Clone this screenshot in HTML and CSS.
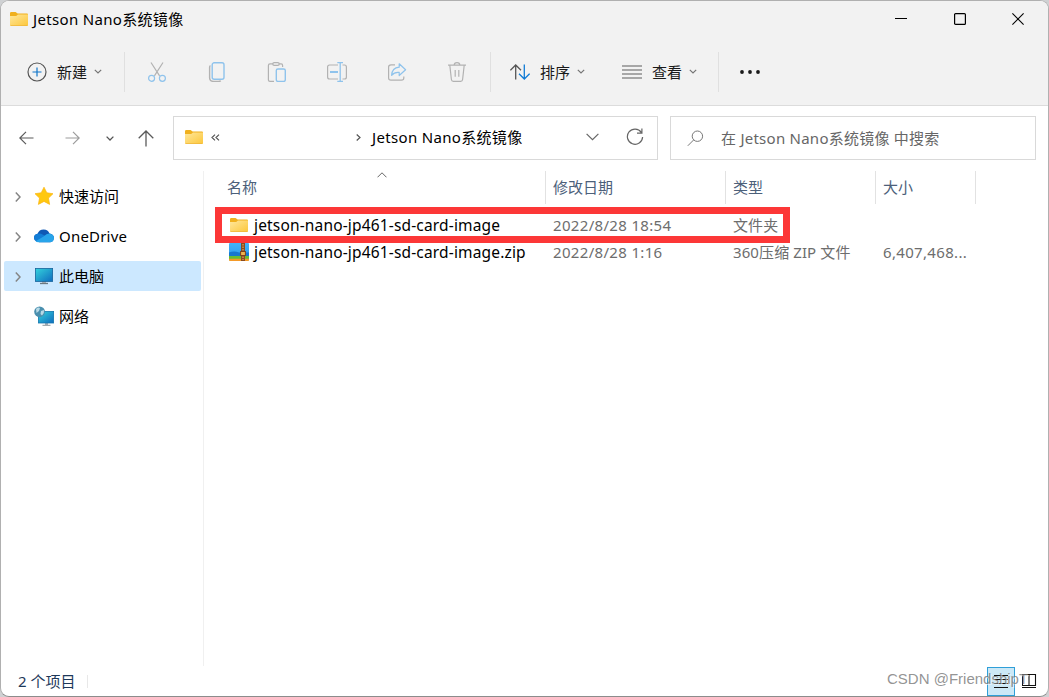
FILE: index.html
```html
<!DOCTYPE html>
<html lang="zh-CN">
<head>
    <meta charset="UTF-8">
    <meta name="viewport" content="width=device-width, initial-scale=1.0">
    <title>Jetson Nano系统镜像</title>
    <link rel="stylesheet" href="styles.css">
</head>
<body>
    <!-- 公用图标 -->
    <svg class="defs" width="0" height="0">
        <defs>
            <linearGradient id="g-folder" x1="0" y1="0" x2="1" y2="1">
                <stop offset="0" stop-color="#ffe79c"/>
                <stop offset="1" stop-color="#fcc73b"/>
            </linearGradient>
            <linearGradient id="g-screen" x1="0" y1="0" x2="1" y2="1">
                <stop offset="0" stop-color="#34d3dc"/>
                <stop offset="1" stop-color="#0f6cbf"/>
            </linearGradient>
            <linearGradient id="g-zip" x1="0" y1="0" x2="0" y2="1">
                <stop offset="0" stop-color="#42b4f8"/>
                <stop offset="1" stop-color="#2a96ee"/>
            </linearGradient>
            <symbol id="folder" viewBox="0 0 18 14">
                <path d="M0 1.2Q0 0 1.2 0H5.6L7.6 1.6H17Q18 1.6 18 2.6V8H0z" fill="#f0b01e"/>
                <path d="M0 3.9H6.2L8 2.5H18V13Q18 14 17 14H1Q0 14 0 13z" fill="url(#g-folder)"/>
                <path d="M.5 13.6H17.5" stroke="#edb53a" stroke-width=".8"/>
            </symbol>
            <symbol id="down" viewBox="0 0 8 5">
                <path d="M.8 .8L4 4L7.2 .8" fill="none" stroke="currentColor" stroke-width="1.2"/>
            </symbol>
            <symbol id="right" viewBox="0 0 6 10">
                <path d="M.8 .6L5 5L.8 9.4" fill="none" stroke="currentColor" stroke-width="1.5"/>
            </symbol>
        </defs>
    </svg>

    <div class="window">
        <div class="titlebar">
            <svg class="folder" width="18" height="14"><use href="#folder"/></svg>
            <span class="title">Jetson Nano系统镜像</span>
            <div class="controls">
                <svg width="12" height="12"><path d="M0 5.5H12" stroke="#000"/></svg>
                <svg width="12" height="12"><rect x=".6" y=".6" width="10.8" height="10.8" rx="1" fill="none" stroke="#000" stroke-width="1.2"/></svg>
                <svg width="12" height="12"><path d="M.4 .4L11.6 11.6M11.6 .4L.4 11.6" stroke="#000" stroke-width="1.1"/></svg>
            </div>
        </div>

        <div class="toolbar">
            <div class="tool new">
                <svg width="20" height="20" fill="none">
                    <circle cx="10" cy="10" r="9" stroke="#555" stroke-width="1.2"/>
                    <path d="M5.5 10H14.5M10 5.5V14.5" stroke="#0f75c9" stroke-width="1.2"/>
                </svg>
                <span>新建</span>
                <svg class="arrow" width="8" height="5"><use href="#down"/></svg>
            </div>
            <i class="line"></i>
            <div class="icons">
                <svg width="20" height="20" fill="none" stroke-width="1.2">
                    <path d="M4 .5L12.6 13.8M16 .5L7.4 13.8" stroke="#b2b2b2"/>
                    <circle cx="4.6" cy="16.3" r="3" stroke="#8fc3ec"/>
                    <circle cx="15.4" cy="16.3" r="3" stroke="#8fc3ec"/>
                </svg>
                <svg width="20" height="20" fill="none" stroke-width="1.2">
                    <path d="M3.4 3.5Q2.6 4 2.6 5.5V15.5Q2.6 19.4 6.5 19.4H11.5Q13.2 19.4 13.7 18.6" stroke="#b2b2b2" stroke-width="1.4"/>
                    <rect x="5.2" y=".8" width="11.8" height="16.4" rx="2" stroke="#8fc3ec" stroke-width="1.4"/>
                </svg>
                <svg width="20" height="20" fill="none" stroke-width="1.2">
                    <path d="M6 1.8H3Q1.4 1.8 1.4 3.4V18Q1.4 19.4 3 19.4H7M12 1.8H14.2Q15.6 1.8 15.6 3.4V5" stroke="#b2b2b2"/>
                    <rect x="5.8" y=".7" width="6.4" height="2.6" rx="1.3" stroke="#b2b2b2"/>
                    <rect x="9.3" y="7" width="9" height="12.4" rx="1.6" stroke="#8fc3ec" stroke-width="1.4"/>
                </svg>
                <svg width="20" height="20" fill="none" stroke-width="1.2">
                    <path d="M11 3H2.5Q.6 3 .6 5V15Q.6 17 2.5 17H11M15.5 3H17.5Q19.4 3 19.4 5V15Q19.4 17 17.5 17H15.5" stroke="#b2b2b2"/>
                    <path d="M3 10H11" stroke="#8fc3ec" stroke-width="2"/>
                    <path d="M10.3 .7H16M10.3 19.3H16M13.2 .7V19.3" stroke="#8fc3ec" stroke-width="1.3"/>
                </svg>
                <svg width="20" height="20" fill="none" stroke-width="1.2">
                    <path d="M8 2.8H4Q1.6 2.8 1.6 5V16Q1.6 18.2 4 18.2H14.5Q16.8 18.2 16.8 16V14.5" stroke="#b2b2b2"/>
                    <path d="M12.2 1.8L18.6 7.8L12.2 13.5V10.4Q7.5 9.8 4.6 13.4Q5 5.8 12.2 5.2z" stroke="#8fc3ec" stroke-linejoin="round"/>
                </svg>
                <svg width="20" height="20" fill="none" stroke-width="1.2" stroke="#b2b2b2">
                    <path d="M1 3.2H19M2.8 3.2L4.4 17.5Q4.6 19.4 6.3 19.4H13.7Q15.4 19.4 15.6 17.5L17.2 3.2M7.2 3Q7.2 .6 10 .6Q12.8 .6 12.8 3M8.2 8V14.8M11.8 8V14.8"/>
                </svg>
            </div>
            <i class="line"></i>
            <div class="tool sort">
                <svg width="20" height="16" fill="none" stroke-width="1.3">
                    <path d="M5.7 15.5V1M.4 6.3L5.7 1L11 6.3" stroke="#555"/>
                    <path d="M14.3 .5V15M9 9.7L14.3 15L19.6 9.7" stroke="#0f7bd5"/>
                </svg>
                <span>排序</span>
                <svg class="arrow" width="8" height="5"><use href="#down"/></svg>
            </div>
            <div class="tool view">
                <svg width="20" height="14"><path d="M0 1H20M0 5H20M0 9H20M0 13H20" stroke="#5c5c5c" stroke-width="1.2"/></svg>
                <span>查看</span>
                <svg class="arrow" width="8" height="5"><use href="#down"/></svg>
            </div>
            <i class="line"></i>
            <svg class="more" width="20" height="4" fill="#1a1a1a"><circle cx="2" cy="2" r="1.9"/><circle cx="10" cy="2" r="1.9"/><circle cx="18" cy="2" r="1.9"/></svg>
        </div>

        <div class="navbar">
            <div class="history">
                <svg width="15" height="14"><path d="M14.5 7H1M7 .8L.8 7L7 13.2" fill="none" stroke="#5a5a5a" stroke-width="1.2"/></svg>
                <svg width="15" height="14"><path d="M.5 7H14M8 .8L14.2 7L8 13.2" fill="none" stroke="#9c9c9c" stroke-width="1.2"/></svg>
                <svg width="8" height="5"><path d="M.6 .6L4 4L7.4 .6" fill="none" stroke="#555" stroke-width="1.3"/></svg>
                <svg width="16" height="17"><path d="M8 16.5V1M.7 8.3L8 1L15.3 8.3" fill="none" stroke="#5a5a5a" stroke-width="1.3"/></svg>
            </div>
            <div class="address">
                <svg class="folder" width="18" height="14"><use href="#folder"/></svg>
                <svg class="back" width="9" height="7"><path d="M4 .6L1 3.5L4 6.4M8 .6L5 3.5L8 6.4" fill="none" stroke="#555" stroke-width="1.2"/></svg>
                <svg class="crumb" width="5" height="7"><path d="M.7 .5L4 3.5L.7 6.5" fill="none" stroke="#555" stroke-width="1.2"/></svg>
                <span class="path">Jetson Nano系统镜像</span>
                <svg width="13" height="8"><path d="M.6 .8L6.5 6.7L12.4 .8" fill="none" stroke="#666" stroke-width="1.2"/></svg>
                <svg class="refresh" width="18" height="18"><path d="M15.3 4.4A7.6 7.6 0 1 0 16.6 9M15.9 .6V5.2H11" fill="none" stroke="#666" stroke-width="1.2"/></svg>
            </div>
            <div class="search">
                <svg width="17" height="17"><circle cx="10.4" cy="6.2" r="5.2" fill="none" stroke="#777"/><path d="M6.7 9.9L.8 15.8" stroke="#777"/></svg>
                <span>在 Jetson Nano系统镜像 中搜索</span>
            </div>
        </div>

        <div class="main">
            <ul class="sidebar">
                <li>
                    <svg class="expand" width="6" height="10"><use href="#right"/></svg>
                    <svg class="pic" width="20" height="20"><path d="M10 1.2L12.8 6.8L19 7.7L14.5 12.1L15.6 18.4L10 15.4L4.4 18.4L5.5 12.1L1 7.7L7.2 6.8z" fill="#ffc80f" stroke="#fbb512" stroke-width=".7" stroke-linejoin="round"/></svg>
                    <span>快速访问</span>
                </li>
                <li class="od">
                    <svg class="expand" width="6" height="10"><use href="#right"/></svg>
                    <svg class="pic" width="20" height="14"><path d="M4 12Q0 12 0 8.5Q.2 5.5 3.6 4.8Q5 .5 9.7 .5Q14 .5 15.5 4.4Q19.9 5 20 9Q19 13.3 16 13.3H5z" fill="#0f59b5"/><path d="M3.6 4.7Q6.3 4 9 5.8L18 10Q12 14 2.5 12.6Q0 11.5 0 8.7Q.2 5.3 3.6 4.7z" fill="#127dd6"/><path d="M15.2 4.4Q19.8 5 20 9Q19.6 13.3 16 13.3H4.5Q2.5 13.3 1.6 12.3L10 7.2Q12.3 4.4 15.2 4.4z" fill="#28a4ea"/></svg>
                    <span>OneDrive</span>
                </li>
                <li class="active">
                    <svg class="expand" width="6" height="10"><use href="#right"/></svg>
                    <svg class="pic" width="20" height="18"><path d="M8 14H12V16.4H8z" fill="#a8b0b7"/><path d="M6 16.5H14" stroke="#6c7881" stroke-width="1.3"/><rect x="1.4" y="1.4" width="17.2" height="13" fill="url(#g-screen)" stroke="#17639c" stroke-width=".8"/></svg>
                    <span>此电脑</span>
                </li>
                <li class="net">
                    <svg class="pic" width="20" height="20"><path d="M11 17H14V19H11z" fill="#a8b0b7"/><path d="M8.5 19.3H16.5" stroke="#8a959d"/><rect x="4.4" y="5.4" width="15.2" height="11.6" fill="url(#g-screen)" stroke="#1477ae" stroke-width=".8"/><circle cx="5.6" cy="5.8" r="5.4" fill="#4a8fae"/><path d="M2 3Q4 .8 6 2L5 5L2.5 7zM7 5L10 4Q10.6 7 8 9.6L6.5 8z" fill="#b7d9e6"/></svg>
                    <span>网络</span>
                </li>
            </ul>

            <div class="list">
                <div class="row head">
                    <span>名称<svg class="up" width="10" height="6"><path d="M.5 5.3L5 .8L9.5 5.3" fill="none" stroke="#666"/></svg></span>
                    <span>修改日期</span>
                    <span>类型</span>
                    <span>大小</span>
                </div>
                <div class="row file">
                    <span class="name"><svg width="20" height="20"><use href="#folder" x="1" y="3" width="18" height="14"/></svg><b>jetson-nano-jp461-sd-card-image</b></span>
                    <span>2022/8/28 18:54</span>
                    <span class="type">文件夹</span>
                    <span></span>
                </div>
                <div class="row file">
                    <span class="name"><svg width="20" height="20"><rect width="20" height="17" y="1" rx="1" fill="url(#g-zip)"/><path d="M0 13H20V17Q20 19 18 19H2Q0 19 0 17z" fill="#65bd35"/><path d="M0 16.8H20V18Q20 19 19 19H1Q0 19 0 18z" fill="#f49a28"/><path d="M0 10.5Q5 8.5 10 10.5H20V14H0z" fill="#1677cf"/><path d="M12 1H16V19H12z" fill="#8a4b20"/><path d="M14 2V18" stroke="#d49b55" stroke-width="1.4" stroke-dasharray="1.5 1"/><rect x="11.6" y="9.5" width="4.8" height="4" fill="#f0b44d" stroke="#7b4218"/></svg><b>jetson-nano-jp461-sd-card-image.zip</b></span>
                    <span>2022/8/28 1:16</span>
                    <span class="type">360压缩 ZIP 文件</span>
                    <span>6,407,468...</span>
                </div>
                <!-- 红色标注框 -->
                <div class="mark"></div>
            </div>
        </div>

        <div class="status">
            <span>2 个项目</span>
            <i class="line"></i>
            <div class="modes">
                <div class="mode on"><svg width="15" height="14"><path d="M0 1.5H14M0 5.5H14M0 9.5H14M0 13.5H14" stroke="#111"/></svg></div>
                <div class="mode"><svg width="15" height="14"><path d="M.5 .5H13.5V11.5H.5zM7 .5V11.5M0 13.5H14" fill="none" stroke="#111" stroke-width="1.1"/></svg></div>
            </div>
            <span class="watermark">CSDN @FriendshipT</span>
        </div>
    </div>
</body>
</html>
```
FILE: styles.css
```css
* {
    margin: 0;
    padding: 0;
    box-sizing: border-box;
}
body {
    width: 1049px;
    height: 697px;
    overflow: hidden;
    background-color: #cfd1d3;
    font: 15px/20px "Noto Sans", "Noto Sans CJK SC", sans-serif;
    color: #000;
}
ul {
    list-style: none;
}
svg {
    display: block;
    flex: none;
}
span {
    white-space: nowrap;
}
.defs {
    position: absolute;
}


.window {
    display: flex;
    flex-direction: column;
    width: 1049px;
    height: 697px;
    border: 1px solid #b0b0b0;
    border-bottom-color: #8c8c8c;
    border-radius: 9px;
    background-color: #fff;
    overflow: hidden;
}


.titlebar {
    display: flex;
    align-items: center;
    height: 37px;
    padding-left: 9px;
    background-color: #f2f2f2;
}
.titlebar .folder {
    margin-top: -1px;
}
.title {
    margin: -2px 0 0 5px;
    letter-spacing: .33px;
}
.controls {
    display: flex;
    gap: 46.5px;
    margin: -2px 24px 0 auto;
}


.toolbar {
    display: flex;
    align-items: center;
    height: 68px;
    background-color: #f2f2f2;
    border-bottom: 1px solid #dcdcdc;
}
.line {
    width: 1px;
    height: 40px;
    background-color: #e0e0e0;
}
.tool {
    display: flex;
    align-items: center;
}
.tool span {
    margin: 0 11px 0 10px;
    color: #1a1a1a;
}
.tool .arrow {
    margin-left: -4px;
    color: #777;
}
.new {
    width: 123px;
    padding-left: 26px;
}
.icons {
    display: flex;
    gap: 40px;
    padding: 0 23px 0 22px;
}
.sort {
    width: 112px;
    padding-left: 19px;
}
.view {
    width: 115px;
    padding-left: 19px;
}
.more {
    margin-left: 21px;
}


.navbar {
    display: flex;
    height: 65px;
    padding: 10px 12px 11px 18px;
}
.history {
    display: flex;
    align-items: center;
    width: 154px;
}
.history svg:nth-child(2) {
    margin-left: 31px;
}
.history svg:nth-child(3) {
    margin-left: 26px;
}
.history svg:nth-child(4) {
    margin-left: 24px;
}
.address,
.search {
    display: flex;
    align-items: center;
    height: 44px;
    border: 1px solid #d9d9d9;
}
.address {
    width: 485px;
    padding: 0 0 2px 11px;
}
.back {
    margin-left: 8px;
}
.crumb {
    margin-left: 136px;
}
.path {
    width: 214px;
    margin-left: 11px;
    letter-spacing: .33px;
}
.refresh {
    margin-left: 27px;
}
.search {
    width: 366px;
    margin-left: 12px;
    padding-left: 16px;
    color: #666;
}
.search span {
    margin-left: 17px;
    letter-spacing: .25px;
}


.main {
    display: flex;
    height: 495px;
}
.sidebar {
    width: 203px;
    padding: 10px 3px 0;
    border-right: 1px solid #f0f0f0;
}
.sidebar li {
    display: flex;
    align-items: center;
    width: 197px;
    height: 30px;
    margin-bottom: 10px;
    padding-left: 11px;
    border-radius: 2px;
}
.sidebar .active {
    background-color: #cce8ff;
}
.sidebar .net {
    padding-left: 30px;
}
.expand {
    margin: 2px 13px 0 0;
    color: #858585;
}
.sidebar span {
    margin-left: 5px;
}
.od span {
    letter-spacing: .2px;
}


.list {
    position: relative;
    flex: 1;
}
.row {
    display: grid;
    grid-template-columns: 342px 180px 150px 100px;
}
.head {
    height: 33px;
    margin-bottom: 8px;
    color: #4c607a;
}
.head span {
    position: relative;
    padding: 6px 0 0 7px;
    border-right: 1px solid #e2e2e2;
}
.head span:first-child {
    padding-left: 23px;
}
.up {
    position: absolute;
    left: 173px;
    top: 1px;
}
.file {
    height: 27px;
    color: #6d6d6d;
}
.file span {
    padding: 3px 0 0 7px;
    letter-spacing: .33px;
}
.file .type {
    letter-spacing: .1px;
}
.file .name {
    display: flex;
    padding-left: 25px;
    font-size: 15.5px;
    letter-spacing: .16px;
    color: #000;
}
.name b {
    margin-left: 5px;
    font-weight: normal;
}
.mark {
    position: absolute;
    left: 11px;
    top: 36px;
    width: 575px;
    height: 36px;
    border: 7px solid #fc3737;
}


.status {
    position: relative;
    display: flex;
    align-items: center;
    height: 30px;
    padding-left: 17px;
    color: #1e395b;
}
.status .line {
    height: 13px;
    margin-left: 12px;
    background-color: #e8e8e8;
}
.modes {
    display: flex;
    margin-left: auto;
    padding-right: 5px;
}
.mode {
    display: flex;
    align-items: center;
    justify-content: center;
    width: 28px;
    height: 29px;
}
.on {
    border: 1px solid #2f9fd8;
    background-color: #cce8f6;
}
.watermark {
    position: absolute;
    left: 886px;
    top: 3px;
    font: 15px/20px "Liberation Sans", sans-serif;
    color: rgba(120, 120, 120, .8);
    text-shadow: 1px 1px 0 rgba(255, 255, 255, .6);
}
```
